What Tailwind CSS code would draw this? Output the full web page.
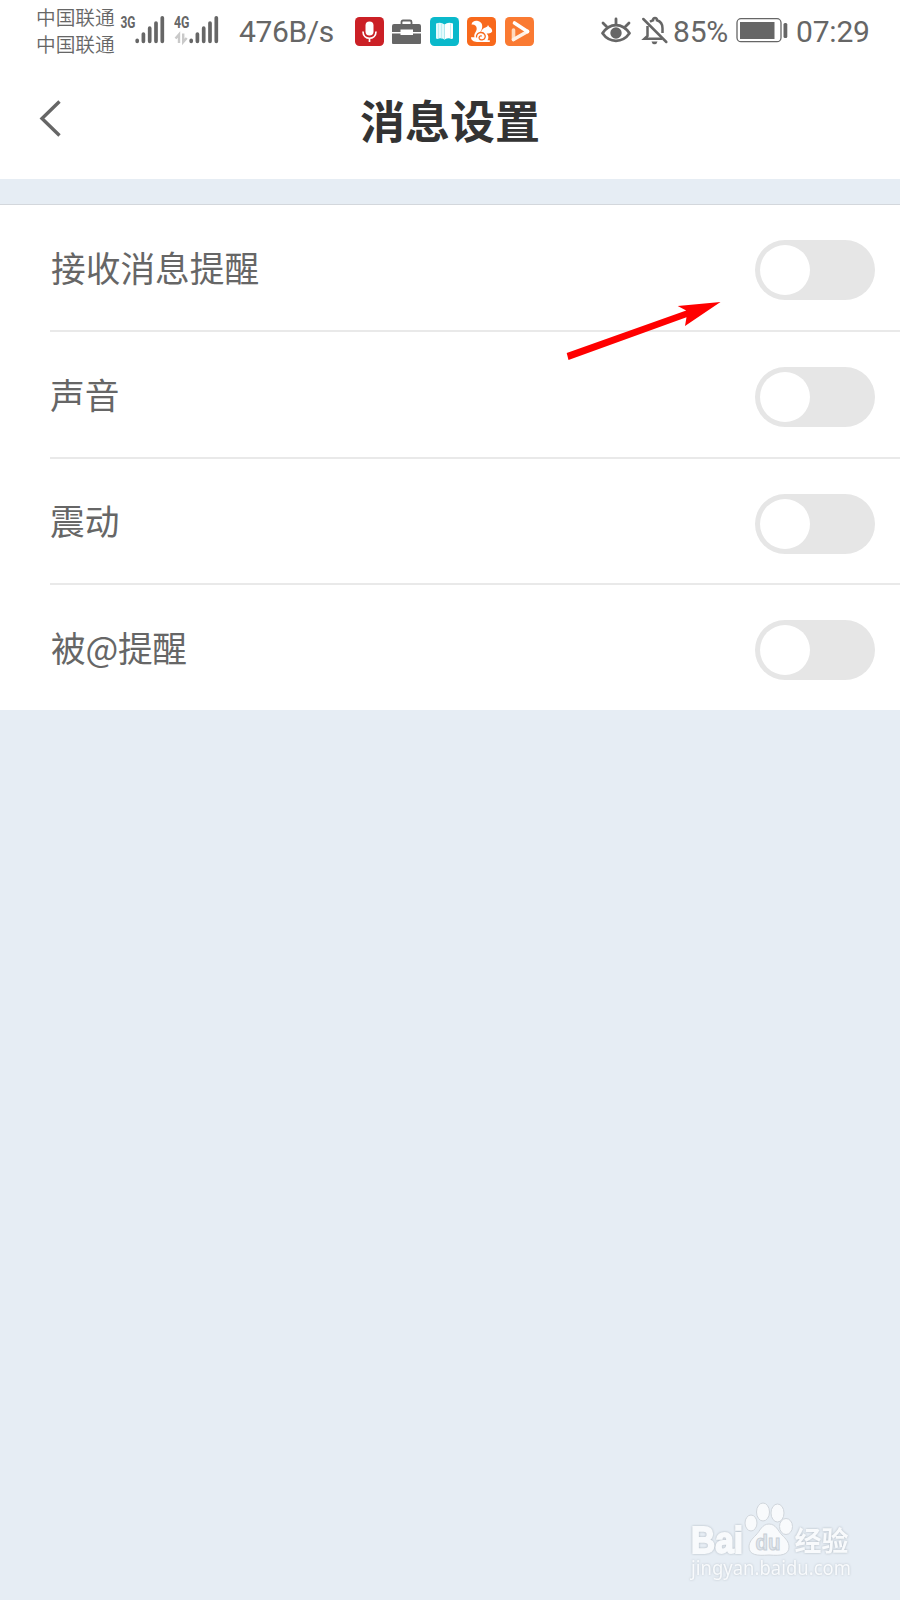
<!DOCTYPE html>
<html lang="zh-CN">

<head>
  <meta charset="UTF-8" />
  <meta name="viewport" content="width=device-width, initial-scale=1.0" />
  <title>消息设置</title>
  <script src="https://cdn.jsdelivr.net/npm/@tailwindcss/browser@4"></script>
</head>

<body class="relative w-[900px] h-[1600px] overflow-hidden bg-[#e6edf4] font-['Roboto','Noto_Sans_CJK_SC',sans-serif] text-[#666]">
  <!-- STATUS BAR -->
  <div class="flex items-center h-[62px] bg-white pl-9">
    <div class="w-[84px] shrink-0 pb-[3px] text-[19.7px] leading-[27px] whitespace-nowrap font-['Noto_Sans_CJK_SC',sans-serif] font-[350]">
      <div>中国联通</div>
      <div>中国联通</div>
    </div>

    <!-- signal: 3G -->
    <svg class="w-[54px] h-[62px] shrink-0" viewBox="120 0 54 62" fill="#666">
      <text x="120.5" y="27.8" font-family="Roboto" font-size="16.5" font-weight="700" textLength="15" lengthAdjust="spacingAndGlyphs">3G</text>
      <path d="M137.2 40.4v.9M143.4 34v7.3M149.7 28.2v13.1M156 23v18.3M162.3 17.8v23.5" stroke="#666" stroke-width="3.7" stroke-linecap="round" />
    </svg>
    <!-- signal: 4G -->
    <svg class="w-[65px] h-[62px] shrink-0" viewBox="174 0 65 62" fill="#666">
      <text x="174" y="27.8" font-family="Roboto" font-size="16.5" font-weight="700" textLength="15.5" lengthAdjust="spacingAndGlyphs">4G</text>
      <path d="M179 43v-8.5l-3.5 4M183.2 33.5v8.5l3.5-4" fill="none" stroke="#c9c9c9" stroke-width="2.4" />
      <path d="M191.2 40.4v.9M197.4 34v7.3M203.7 28.2v13.1M210 23v18.3M216.3 17.8v23.5" stroke="#666" stroke-width="3.7" stroke-linecap="round" />
    </svg>

    <div class="w-[116px] shrink-0 pt-px text-[30px] leading-none tracking-[-0.4px] whitespace-nowrap">476B/s</div>

    <!-- notification icons -->
    <div class="flex w-[245px] shrink-0 gap-[8.4px]">
      <svg class="w-[29px] h-[29px] shrink-0" viewBox="0 0 29 29">
        <rect width="29" height="29" rx="4.5" fill="#cb2026" />
        <rect x="10.5" y="4.5" width="8" height="14" rx="4" fill="#fff" />
        <path d="M8 14.5c0 9 13 9 13 0M14.5 21v4" fill="none" stroke="#fff" stroke-width="1.7" />
      </svg>
      <svg class="w-[29px] h-[29px] shrink-0" viewBox="0 0 29 29" fill="#666">
        <path d="M9.500 7.500V5q0-1.500 1.500-1.500h7Q19.500 3.500 19.500 5v2.500" fill="none" stroke="#666" stroke-width="1.8" />
        <path d="M2 7h25q2 0 2 2v6h-8v-2.500H8.500V15H0V9q0-2 2-2zM0 16.500h8.500V18H21v-1.500h8V26q0 1-1 1H1q-1 0-1-1z" />
        <rect x="9.500" y="13.300" width="10.500" height="3.500" rx="1" fill="#fff" />
      </svg>
      <svg class="w-[29px] h-[29px] shrink-0" viewBox="0 0 29 29">
        <rect width="29" height="29" rx="4.5" fill="#0ab9cb" />
        <path d="M6 6.5q5-2 8.500 1v15q-4-2-7-.5-1.500 0-1.500-1z" fill="#e4fafc" />
        <path d="M23 6.5q-5-2-8.500 1v15q4-2 7-.5 1.500 0 1.500-1z" fill="#fff" />
        <path d="M8.500 6.500v15M11.500 6.500v15M14.500 8v15M20.500 6.500v15" stroke="#a8e8ee" stroke-width=".6" />
      </svg>
      <svg class="w-[29px] h-[29px] shrink-0" viewBox="0 0 29 29">
        <rect width="29" height="29" rx="4.5" fill="#f8691c" />
        <path d="M4.500 7.500C5 4.500 8 3.300 11 4c4 1 5 4.500 3.800 8-.5 1.500-1.500 2.500-1.300 3.500 1.500-3 3-4.500 5-5l1.800-1 .7-1.500 1.200 2c2 .7 3 2.300 3 4.500-1.500 2-3.500 1.800-5.500 2 2.200 2 2 5 .8 6.800h2.300V25H10c-3.500-.3-6-2-6-4.800h3.500C6.500 16.500 9.500 15 9.700 12 9.800 9 8 7.300 4.500 7.500z" fill="#fff" />
        <path d="M9.500 20.500c-.5-3 2-5.200 4.700-5 3 .2 4.800 2.800 3.800 5.300-.9 2.400-4.600 2.900-5.700.8-.8-1.800.8-3.400 2.500-2.500" fill="none" stroke="#f8691c" stroke-width="1.3" />
      </svg>
      <svg class="w-[29px] h-[29px] shrink-0" viewBox="0 0 29 29">
        <rect width="29" height="29" rx="4.5" fill="#fa7a32" />
        <g fill="none" stroke-width="3.6" stroke-linecap="round" stroke-linejoin="round">
          <path d="M8.500 13v9.500" stroke="#ffd9bd" />
          <path d="M8.500 22.500l14-8" stroke="#fff0e5" />
          <path d="M9.500 6l13 8.500" stroke="#fff" />
        </g>
      </svg>
    </div>

    <!-- eye comfort -->
    <svg class="w-[41px] h-[62px] shrink-0" viewBox="600 0 41 62" fill="none" stroke="#666">
      <path d="M602.500 33.300c7-11 20-11 27 0-7 10-20 10-27 0z" stroke-width="2.800" stroke-linejoin="round" />
      <circle cx="616" cy="33" r="5.700" fill="#666" stroke="none" />
      <path d="M616 24v-5M606.500 26.500l-3.500-3.500M625.500 26.500l3.500-3.500" stroke-width="2.800" stroke-linecap="round" />
    </svg>
    <!-- muted bell -->
    <svg class="w-[32px] h-[62px] shrink-0" viewBox="641 0 32 62" fill="none" stroke="#666" stroke-width="2.500">
      <path d="M647.500 26v10l-3 2.700h17.500M650 21.800q1.500-1 3-1.500 0-2.300 2-2.300t2 2.300q5.500 1.700 5.500 8v4.700" />
      <path d="M643.300 19l23 23" stroke-linecap="round" />
      <path d="M651.500 41.500h6q-.5 2.700-3 2.700t-3-2.700z" fill="#666" stroke="none" />
    </svg>

    <div class="w-[63px] shrink-0 pt-px text-[30px] leading-none tracking-[-0.2px] whitespace-nowrap">85%</div>

    <svg class="w-[60px] h-[62px] shrink-0" viewBox="736 0 60 62">
      <rect x="737" y="18.700" width="44" height="23" rx="4" fill="none" stroke="#666" stroke-width="1.300" />
      <rect x="740" y="22" width="34.500" height="17" fill="#666" />
      <rect x="783.500" y="23" width="3.800" height="15" rx="1.500" fill="#666" />
    </svg>

    <div class="pt-px text-[30px] leading-none tracking-[-0.2px] whitespace-nowrap">07:29</div>
  </div>

  <!-- TITLE BAR -->
  <div class="grid grid-cols-[100px_1fr_100px] items-center h-[117px] bg-white">
    <svg class="w-[24px] h-[40px] ml-[38px] -mt-[5px]" viewBox="38 98 24 40">
      <path d="M59.500 101.500L42 118.500l17.500 17" fill="none" stroke="#666" stroke-width="3.400" />
    </svg>
    <h1 class="text-center pb-[3px] text-[45px] leading-none font-bold text-[#333] font-['Noto_Sans_CJK_SC',sans-serif]">消息设置</h1>
  </div>

  <!-- SETTINGS LIST -->
  <div class="mt-[25px] h-[506px] bg-white border-t border-[#d3d7dc] pl-[50px] grid grid-rows-[127px_127px_126px_125px] text-[34.7px] font-['Noto_Sans_CJK_SC',sans-serif]">
    <div class="flex items-center justify-between pr-[25px] pt-[5px] border-b-2 border-[#e9e9e9]">
      <span class="leading-none pl-px pb-[6px]">接收消息提醒</span>
      <div class="w-[120px] h-[60px] rounded-full bg-[#e6e6e6] p-[5px]"><div class="size-[50px] rounded-full bg-white"></div></div>
    </div>
    <div class="flex items-center justify-between pr-[25px] pt-[5px] border-b-2 border-[#e9e9e9]">
      <span class="leading-none pb-[6px]">声音</span>
      <div class="w-[120px] h-[60px] rounded-full bg-[#e6e6e6] p-[5px]"><div class="size-[50px] rounded-full bg-white"></div></div>
    </div>
    <div class="flex items-center justify-between pr-[25px] pt-[5px] border-b-2 border-[#e9e9e9]">
      <span class="leading-none pb-[6px]">震动</span>
      <div class="w-[120px] h-[60px] rounded-full bg-[#e6e6e6] p-[5px]"><div class="size-[50px] rounded-full bg-white"></div></div>
    </div>
    <div class="flex items-center justify-between pr-[25px] pt-[5px]">
      <span class="leading-none pl-px pb-[6px] tracking-[-0.3px]">被@提醒</span>
      <div class="w-[120px] h-[60px] rounded-full bg-[#e6e6e6] p-[5px]"><div class="size-[50px] rounded-full bg-white"></div></div>
    </div>
  </div>

  <!-- ARROW -->
  <svg class="absolute left-[560px] top-[295px] w-[170px] h-[70px]" viewBox="560 295 170 70">
    <path d="M566.700 353l119.500-42.500-8.500-4.500L720.500 302l-35.500 24 1.500-8.800L568.500 360z" fill="#f00" />
  </svg>

  <!-- WATERMARK -->
  <svg class="absolute left-[680px] top-[1495px] w-[190px] h-[95px]" viewBox="680 1495 190 95" fill="#f8fafc" stroke="#d0d6dc" stroke-width="1">
    <text class="drop-shadow-[0_0_1px_#aeb7c0]" x="691" y="1553" font-family="Liberation Sans, sans-serif" font-weight="700" font-size="36" textLength="52" lengthAdjust="spacingAndGlyphs" stroke="#f8fafc" stroke-width="1.8">Bai</text>
    <ellipse cx="751" cy="1523" rx="6" ry="8" />
    <ellipse cx="763" cy="1512" rx="6.500" ry="9" />
    <ellipse cx="777.500" cy="1513" rx="6.500" ry="9" />
    <ellipse cx="786" cy="1526.500" rx="6.500" ry="8" />
    <path d="M769 1524c-7 0-9 7-13 11s-7 7-7 12c0 8 8 9 20 8 12 1 20 0 20-8 0-5-3-8-7-12s-6-11-13-11z" />
    <text x="755.500" y="1550" font-family="Liberation Sans, sans-serif" font-weight="700" font-size="22" textLength="25" lengthAdjust="spacingAndGlyphs" fill="#e0e6ec" stroke="#c8cfd6">du</text>
    <text class="drop-shadow-[0_0_1px_#aeb7c0]" x="794.500" y="1551" font-family="Noto Sans CJK SC, sans-serif" font-size="27" font-weight="700" textLength="54" lengthAdjust="spacingAndGlyphs" stroke="none">经验</text>
    <text class="drop-shadow-[0_0_1px_#bcc4cc]" x="691" y="1575" font-family="Noto Sans, sans-serif" font-size="20" textLength="160" lengthAdjust="spacingAndGlyphs" stroke="none">jingyan.baidu.com</text>
  </svg>
</body>

</html>
